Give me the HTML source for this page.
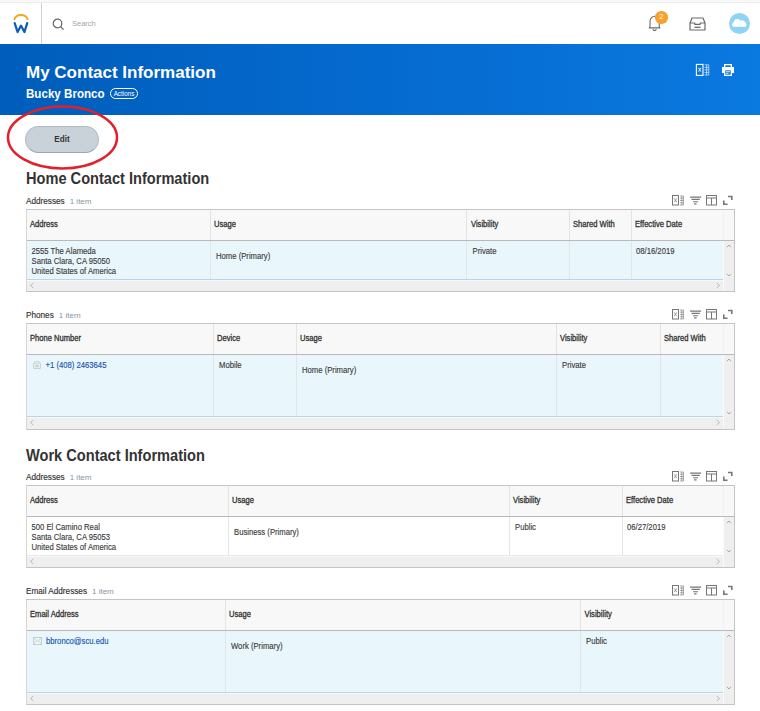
<!DOCTYPE html>
<html><head><meta charset="utf-8">
<style>
*{margin:0;padding:0;box-sizing:border-box}
html,body{width:760px;height:711px;overflow:hidden;background:#fff;font-family:"Liberation Sans",sans-serif;color:#333}
.abs{position:absolute}
#top{position:absolute;left:0;top:0;width:760px;height:44px;background:#fff;border-top:2px solid #f8f8f8;box-shadow:inset 0 1px 0 #ededed}
#sep{position:absolute;left:41px;top:3px;width:1px;height:41px;background:#cdd5dc}
#hdr{position:absolute;left:0;top:44px;width:760px;height:71px;background:linear-gradient(90deg,#005dbb 0%,#056acf 50%,#0a79e0 100%)}
.t{position:absolute;white-space:nowrap;line-height:1}
.h1{font-weight:bold;font-size:17px;color:#fff}
.sec{font-weight:bold;font-size:14.6px;color:#333;transform:scaleY(1.1);transform-origin:0 0}
.lbl{font-size:8.2px;color:#333;-webkit-text-stroke:0.15px #333}
.lbl span{color:#8795a3;margin-left:5px;font-size:8px;-webkit-text-stroke:0}
.tbl{position:absolute;left:26px;width:709px;border:1px solid #c9c9c9;background:#fafafa}
.th{position:absolute;top:0;left:0;right:0;background:#f8f8f8;border-bottom:2px solid #c4c4c4}
.row{position:absolute;left:0;background:#e8f5fb;border-bottom:1px solid #9fcbe6}
.row.w{background:#fff;border-bottom:1px solid #e0e0e0}
.hs{position:absolute;left:0;background:#efefef}
.vs{position:absolute;right:0;width:11px;background:#efefef}
.col{position:absolute;width:1px;background:#e2e2e2}
.hd{position:absolute;font-weight:normal;font-size:7.6px;-webkit-text-stroke:0.28px #333;color:#333;white-space:nowrap;line-height:1;transform:scaleY(1.1);transform-origin:0 0}
.cd{position:absolute;font-size:7.7px;color:#3a3a3a;-webkit-text-stroke-width:0.12px;white-space:nowrap;line-height:9px;transform:scaleY(1.1);transform-origin:0 0}
.lnk{color:#1753b0}
</style></head><body>

<div id="top"></div>
<div id="sep"></div>
<!-- logo -->
<svg class="abs" style="left:12px;top:13px" width="18" height="21" viewBox="0 0 18 21">
  <path d="M2.2 7 A7 6.5 0 0 1 15.8 7" fill="none" stroke="#f5a623" stroke-width="2"/>
  <path d="M2.7 10.1 L5.6 19.1 L9 12.6 L12.4 19.1 L15.2 10.1" fill="none" stroke="#0b5fb8" stroke-width="2.2" stroke-linejoin="round" stroke-linecap="round"/>
</svg>
<!-- search -->
<svg class="abs" style="left:52px;top:17.8px" width="13" height="13" viewBox="0 0 13 13">
  <circle cx="5.5" cy="5.5" r="4.3" fill="none" stroke="#666" stroke-width="1.2"/>
  <path d="M8.6 8.6 L11.6 11.6" stroke="#666" stroke-width="1.3"/>
</svg>
<div class="t" style="left:72px;top:20px;font-size:7.5px;color:#a6a6a6">Search</div>
<!-- bell -->
<svg class="abs" style="left:647px;top:14px" width="16" height="18" viewBox="0 0 16 18">
  <path d="M3 12.5 L3 7.5 A4.6 5.2 0 0 1 12.2 7.5 L12.2 12.5 L12.9 13.9 L2.3 13.9 Z" fill="none" stroke="#6b6b6b" stroke-width="1.1" stroke-linejoin="round"/>
  <path d="M6 15 A1.6 1.6 0 0 0 9.2 15" fill="none" stroke="#6b6b6b" stroke-width="1.1"/>
</svg>
<div class="abs" style="left:655px;top:11px;width:12.5px;height:12.5px;border-radius:50%;background:#f7a12c;color:#fff;font-size:7.5px;text-align:center;line-height:12.5px">2</div>
<!-- inbox -->
<svg class="abs" style="left:688.5px;top:16.5px" width="17" height="14" viewBox="0 0 17 14">
  <path d="M1 13 L1 6 L3 1 L14 1 L16 6 L16 13 Z M1 6 L5.8 6 L5.8 7.3 L11.2 7.3 L11.2 6 L16 6" fill="none" stroke="#6b6b6b" stroke-width="1.2" stroke-linejoin="round"/>
  <path d="M5.5 10.3 L11.5 10.3" stroke="#6b6b6b" stroke-width="1.3"/>
</svg>
<!-- avatar -->
<div class="abs" style="left:729px;top:13px;width:21px;height:21px;border-radius:50%;background:#8fd3f5"></div>
<svg class="abs" style="left:732px;top:17px" width="15" height="11" viewBox="0 0 15 11">
  <g fill="#fff"><rect x="0.3" y="6.6" width="14" height="3.1" rx="1.3"/><circle cx="5.3" cy="5.4" r="3.5"/><circle cx="10" cy="6.2" r="2.9"/><circle cx="2.6" cy="7.3" r="2.3"/><circle cx="12" cy="7.4" r="2.3"/></g>
</svg>

<div id="hdr"></div>
<div class="t h1" style="left:26px;top:64px">My Contact Information</div>
<div class="t" style="left:26px;top:86.5px;font-size:11.6px;font-weight:bold;color:#fff;transform:scaleY(1.1);transform-origin:0 0">Bucky Bronco</div>
<div class="abs" style="left:110px;top:88px;width:28px;height:11px;border:1px solid #fff;border-radius:6px;color:#fff;font-size:6.3px;text-align:center;line-height:9.6px">Actions</div>
<!-- excel icon header -->
<svg class="abs" style="left:695px;top:63px" width="15" height="14" viewBox="0 0 15 14">
  <rect x="1.4" y="1.4" width="6.6" height="11" fill="none" stroke="#fff" stroke-width="1.1"/>
  <path d="M3.5 4.8 L5.9 8.6 M5.9 4.8 L3.5 8.6" stroke="#fff" stroke-width="0.9"/>
  <path d="M9.5 1.8 L13.8 1.8 L13.8 12 L9.5 12 M9.5 4.4 L13.8 4.4 M9.5 6.9 L13.8 6.9 M9.5 9.4 L13.8 9.4 M11.6 1.8 L11.6 12" fill="none" stroke="#fff" stroke-width="0.6"/>
</svg>
<svg class="abs" style="left:721px;top:63px" width="14" height="14" viewBox="0 0 14 14">
  <path d="M3 1 L11 1 L11 4 L13 4 L13 10 L11 10 L11 13 L3 13 L3 10 L1 10 L1 4 L3 4 Z" fill="#fff"/>
  <rect x="4.3" y="7.3" width="5.4" height="4.4" fill="#0977dd"/>
  <path d="M5 8.7 L9 8.7 M5 10.3 L7.5 10.3" stroke="#fff" stroke-width="0.8"/>
  <rect x="4.3" y="2.3" width="5.4" height="1.7" fill="#0977dd"/>
</svg>

<!-- Edit button -->
<div class="abs" style="left:25px;top:126px;width:74px;height:27px;border-radius:14px;background:#cad2d9;border:1px solid #b3bbc2;border-bottom-color:#9ea7af"></div>
<div class="t" style="left:54.3px;top:135px;font-size:8.1px;font-weight:bold;color:#333;transform:scaleY(1.12);transform-origin:0 0">Edit</div>
<svg class="abs" style="left:0;top:100px" width="130" height="75" viewBox="0 0 130 75">
  <ellipse cx="62.5" cy="37.5" rx="54.5" ry="30.9" fill="none" stroke="#e2202b" stroke-width="2.5"/>
</svg>

<div class="t sec" style="left:26px;top:171px">Home Contact Information</div>
<div class="t sec" style="left:26px;top:448px">Work Contact Information</div>


<div class="t lbl" style="left:26px;top:198px">Addresses<span>1 item</span></div>
<svg class="abs" style="left:671px;top:195px" width="64" height="11" viewBox="0 0 64 11">
<g fill="none" stroke="#777" stroke-width="1">
<rect x="1.5" y="0.5" width="6" height="9.5"/>
<path d="M3.2 3.3 L5.8 7.2 M5.8 3.3 L3.2 7.2" stroke-width="0.7"/>
<path d="M9 1 L12.5 1 L12.5 10 L9 10 M9 3.2 L12.5 3.2 M9 5.5 L12.5 5.5 M9 7.8 L12.5 7.8 M10.8 1 L10.8 10" stroke-width="0.6"/>
<path d="M19.1 2.1 L30.1 2.1 M20.5 4.4 L28.8 4.4 M22.1 6.7 L27.1 6.7 M23.1 8.9 L25.6 8.9" stroke-width="1.1"/>
<rect x="35.5" y="0.5" width="10" height="9.5"/>
<path d="M35.5 3 L45.5 3 M40.5 3 L40.5 10"/>
<path d="M52.8 5.6 L52.8 9.2 L56.6 9.2 M57 1.5 L60.8 1.5 L60.8 5" stroke-width="1.6"/>
</g></svg>
<div class="abs" style="left:26px;top:209px;width:709px;height:83px;border:1px solid #c4c4c4;border-left-color:#d6d6d6;background:#fff"></div>
<div class="abs" style="left:27px;top:210px;width:707px;height:30px;background:#f8f8f8"></div>
<div class="abs" style="left:27px;top:240px;width:707px;height:1px;background:#b9b9b9"></div>
<div class="abs" style="left:27px;top:241px;width:696px;height:38px;background:#e9f6fc"></div>
<div class="abs" style="left:27px;top:279px;width:696px;height:1px;background:#b3d6ea"></div>
<div class="abs" style="left:27px;top:280px;width:696px;height:1px;background:#fbf8f8"></div>
<div class="abs" style="left:27px;top:281px;width:696px;height:10px;background:#efefef"></div>
<svg class="abs" style="left:29px;top:281.5px" width="6" height="7" viewBox="0 0 6 7"><path d="M4.3 1 L1.5 3.5 L4.3 6" fill="none" stroke="#b0b0b0" stroke-width="0.9"/></svg>
<svg class="abs" style="left:715px;top:281.5px" width="6" height="7" viewBox="0 0 6 7"><path d="M1.7 1 L4.5 3.5 L1.7 6" fill="none" stroke="#b0b0b0" stroke-width="0.9"/></svg>
<div class="abs" style="left:723px;top:241px;width:11px;height:50px;background:#efefef;border-left:1px solid #fafafa"></div>
<div class="abs" style="left:723px;top:210px;width:1px;height:30px;background:#f1f1f1"></div>
<svg class="abs" style="left:726px;top:244.2px" width="6" height="4" viewBox="0 0 6 4"><path d="M0.9 3.2 L3 1 L5.1 3.2" fill="none" stroke="#a9a9a9" stroke-width="1"/></svg>
<svg class="abs" style="left:726px;top:272.5px" width="6" height="4" viewBox="0 0 6 4"><path d="M0.9 0.8 L3 3 L5.1 0.8" fill="none" stroke="#a9a9a9" stroke-width="1"/></svg>
<div class="abs" style="left:210px;top:210px;width:1px;height:30px;background:#e3e3e3"></div>
<div class="abs" style="left:210px;top:241px;width:1px;height:38px;background:#e1e6e8"></div>
<div class="abs" style="left:466px;top:210px;width:1px;height:30px;background:#e3e3e3"></div>
<div class="abs" style="left:466px;top:241px;width:1px;height:38px;background:#e1e6e8"></div>
<div class="abs" style="left:569px;top:210px;width:1px;height:30px;background:#e3e3e3"></div>
<div class="abs" style="left:569px;top:241px;width:1px;height:38px;background:#e1e6e8"></div>
<div class="abs" style="left:631px;top:210px;width:1px;height:30px;background:#e3e3e3"></div>
<div class="abs" style="left:631px;top:241px;width:1px;height:38px;background:#e1e6e8"></div>
<div class="hd" style="left:30px;top:220px">Address</div>
<div class="hd" style="left:214px;top:220px">Usage</div>
<div class="hd" style="left:471px;top:220px">Visibility</div>
<div class="hd" style="left:573px;top:220px">Shared With</div>
<div class="hd" style="left:635px;top:220px">Effective Date</div>
<div class="cd" style="left:31.5px;top:246px">2555 The Alameda<br>Santa Clara, CA 95050<br>United States of America</div>
<div class="cd" style="left:216px;top:251px">Home (Primary)</div>
<div class="cd" style="left:472.5px;top:246px">Private</div>
<div class="cd" style="left:636px;top:246px">08/16/2019</div>
<div class="t lbl" style="left:26px;top:312px">Phones<span>1 item</span></div>
<svg class="abs" style="left:671px;top:309px" width="64" height="11" viewBox="0 0 64 11">
<g fill="none" stroke="#777" stroke-width="1">
<rect x="1.5" y="0.5" width="6" height="9.5"/>
<path d="M3.2 3.3 L5.8 7.2 M5.8 3.3 L3.2 7.2" stroke-width="0.7"/>
<path d="M9 1 L12.5 1 L12.5 10 L9 10 M9 3.2 L12.5 3.2 M9 5.5 L12.5 5.5 M9 7.8 L12.5 7.8 M10.8 1 L10.8 10" stroke-width="0.6"/>
<path d="M19.1 2.1 L30.1 2.1 M20.5 4.4 L28.8 4.4 M22.1 6.7 L27.1 6.7 M23.1 8.9 L25.6 8.9" stroke-width="1.1"/>
<rect x="35.5" y="0.5" width="10" height="9.5"/>
<path d="M35.5 3 L45.5 3 M40.5 3 L40.5 10"/>
<path d="M52.8 5.6 L52.8 9.2 L56.6 9.2 M57 1.5 L60.8 1.5 L60.8 5" stroke-width="1.6"/>
</g></svg>
<div class="abs" style="left:26px;top:323px;width:709px;height:107px;border:1px solid #c4c4c4;border-left-color:#d6d6d6;background:#fff"></div>
<div class="abs" style="left:27px;top:324px;width:707px;height:30px;background:#f8f8f8"></div>
<div class="abs" style="left:27px;top:354px;width:707px;height:1px;background:#b9b9b9"></div>
<div class="abs" style="left:27px;top:355px;width:696px;height:61px;background:#e9f6fc"></div>
<div class="abs" style="left:27px;top:416px;width:696px;height:1px;background:#b3d6ea"></div>
<div class="abs" style="left:27px;top:417px;width:696px;height:1px;background:#fbf8f8"></div>
<div class="abs" style="left:27px;top:418px;width:696px;height:11px;background:#efefef"></div>
<svg class="abs" style="left:29px;top:419.0px" width="6" height="7" viewBox="0 0 6 7"><path d="M4.3 1 L1.5 3.5 L4.3 6" fill="none" stroke="#b0b0b0" stroke-width="0.9"/></svg>
<svg class="abs" style="left:715px;top:419.0px" width="6" height="7" viewBox="0 0 6 7"><path d="M1.7 1 L4.5 3.5 L1.7 6" fill="none" stroke="#b0b0b0" stroke-width="0.9"/></svg>
<div class="abs" style="left:723px;top:355px;width:11px;height:74px;background:#efefef;border-left:1px solid #fafafa"></div>
<div class="abs" style="left:723px;top:324px;width:1px;height:30px;background:#f1f1f1"></div>
<svg class="abs" style="left:726px;top:358.2px" width="6" height="4" viewBox="0 0 6 4"><path d="M0.9 3.2 L3 1 L5.1 3.2" fill="none" stroke="#a9a9a9" stroke-width="1"/></svg>
<svg class="abs" style="left:726px;top:410.5px" width="6" height="4" viewBox="0 0 6 4"><path d="M0.9 0.8 L3 3 L5.1 0.8" fill="none" stroke="#a9a9a9" stroke-width="1"/></svg>
<div class="abs" style="left:213px;top:324px;width:1px;height:30px;background:#e3e3e3"></div>
<div class="abs" style="left:213px;top:355px;width:1px;height:61px;background:#e1e6e8"></div>
<div class="abs" style="left:296px;top:324px;width:1px;height:30px;background:#e3e3e3"></div>
<div class="abs" style="left:296px;top:355px;width:1px;height:61px;background:#e1e6e8"></div>
<div class="abs" style="left:556px;top:324px;width:1px;height:30px;background:#e3e3e3"></div>
<div class="abs" style="left:556px;top:355px;width:1px;height:61px;background:#e1e6e8"></div>
<div class="abs" style="left:660px;top:324px;width:1px;height:30px;background:#e3e3e3"></div>
<div class="abs" style="left:660px;top:355px;width:1px;height:61px;background:#e1e6e8"></div>
<div class="hd" style="left:30px;top:334px">Phone Number</div>
<div class="hd" style="left:217px;top:334px">Device</div>
<div class="hd" style="left:300px;top:334px">Usage</div>
<div class="hd" style="left:560px;top:334px">Visibility</div>
<div class="hd" style="left:664px;top:334px">Shared With</div>
<div class="cd" style="left:45.5px;top:360px"><span class="lnk">+1 (408) 2463645</span></div>
<svg class="abs" style="left:33px;top:361px" width="8" height="8" viewBox="0 0 8 8"><path d="M0.6 3 Q0.6 0.6 4 0.6 Q7.4 0.6 7.4 3 L7.4 7.4 L0.6 7.4 Z" fill="none" stroke="#c9cdd0" stroke-width="1"/><path d="M2.2 5.8 L3 4 L5 4 L5.8 5.8 Z M1 2.6 L7 2.6" fill="#c9cdd0" stroke="#c9cdd0" stroke-width="0.6"/></svg>
<div class="cd" style="left:219px;top:360px">Mobile</div>
<div class="cd" style="left:302px;top:365px">Home (Primary)</div>
<div class="cd" style="left:562px;top:360px">Private</div>
<div class="t lbl" style="left:26px;top:474px">Addresses<span>1 item</span></div>
<svg class="abs" style="left:671px;top:471px" width="64" height="11" viewBox="0 0 64 11">
<g fill="none" stroke="#777" stroke-width="1">
<rect x="1.5" y="0.5" width="6" height="9.5"/>
<path d="M3.2 3.3 L5.8 7.2 M5.8 3.3 L3.2 7.2" stroke-width="0.7"/>
<path d="M9 1 L12.5 1 L12.5 10 L9 10 M9 3.2 L12.5 3.2 M9 5.5 L12.5 5.5 M9 7.8 L12.5 7.8 M10.8 1 L10.8 10" stroke-width="0.6"/>
<path d="M19.1 2.1 L30.1 2.1 M20.5 4.4 L28.8 4.4 M22.1 6.7 L27.1 6.7 M23.1 8.9 L25.6 8.9" stroke-width="1.1"/>
<rect x="35.5" y="0.5" width="10" height="9.5"/>
<path d="M35.5 3 L45.5 3 M40.5 3 L40.5 10"/>
<path d="M52.8 5.6 L52.8 9.2 L56.6 9.2 M57 1.5 L60.8 1.5 L60.8 5" stroke-width="1.6"/>
</g></svg>
<div class="abs" style="left:26px;top:485px;width:709px;height:83px;border:1px solid #c4c4c4;border-left-color:#d6d6d6;background:#fff"></div>
<div class="abs" style="left:27px;top:486px;width:707px;height:30px;background:#f8f8f8"></div>
<div class="abs" style="left:27px;top:516px;width:707px;height:1px;background:#b9b9b9"></div>
<div class="abs" style="left:27px;top:517px;width:696px;height:38px;background:#fff"></div>
<div class="abs" style="left:27px;top:555px;width:696px;height:1px;background:#e8e8e8"></div>
<div class="abs" style="left:27px;top:556px;width:696px;height:1px;background:#fbf8f8"></div>
<div class="abs" style="left:27px;top:557px;width:696px;height:10px;background:#efefef"></div>
<svg class="abs" style="left:29px;top:557.5px" width="6" height="7" viewBox="0 0 6 7"><path d="M4.3 1 L1.5 3.5 L4.3 6" fill="none" stroke="#b0b0b0" stroke-width="0.9"/></svg>
<svg class="abs" style="left:715px;top:557.5px" width="6" height="7" viewBox="0 0 6 7"><path d="M1.7 1 L4.5 3.5 L1.7 6" fill="none" stroke="#b0b0b0" stroke-width="0.9"/></svg>
<div class="abs" style="left:723px;top:517px;width:11px;height:50px;background:#efefef;border-left:1px solid #fafafa"></div>
<div class="abs" style="left:723px;top:486px;width:1px;height:30px;background:#f1f1f1"></div>
<svg class="abs" style="left:726px;top:520.2px" width="6" height="4" viewBox="0 0 6 4"><path d="M0.9 3.2 L3 1 L5.1 3.2" fill="none" stroke="#a9a9a9" stroke-width="1"/></svg>
<svg class="abs" style="left:726px;top:548.5px" width="6" height="4" viewBox="0 0 6 4"><path d="M0.9 0.8 L3 3 L5.1 0.8" fill="none" stroke="#a9a9a9" stroke-width="1"/></svg>
<div class="abs" style="left:228px;top:486px;width:1px;height:30px;background:#e3e3e3"></div>
<div class="abs" style="left:228px;top:517px;width:1px;height:38px;background:#e1e6e8"></div>
<div class="abs" style="left:509px;top:486px;width:1px;height:30px;background:#e3e3e3"></div>
<div class="abs" style="left:509px;top:517px;width:1px;height:38px;background:#e1e6e8"></div>
<div class="abs" style="left:622px;top:486px;width:1px;height:30px;background:#e3e3e3"></div>
<div class="abs" style="left:622px;top:517px;width:1px;height:38px;background:#e1e6e8"></div>
<div class="hd" style="left:30px;top:496px">Address</div>
<div class="hd" style="left:232px;top:496px">Usage</div>
<div class="hd" style="left:513px;top:496px">Visibility</div>
<div class="hd" style="left:626px;top:496px">Effective Date</div>
<div class="cd" style="left:31.5px;top:522px">500 El Camino Real<br>Santa Clara, CA 95053<br>United States of America</div>
<div class="cd" style="left:234px;top:527px">Business (Primary)</div>
<div class="cd" style="left:515px;top:522px">Public</div>
<div class="cd" style="left:627px;top:522px">06/27/2019</div>
<div class="t lbl" style="left:26px;top:587.5px">Email Addresses<span>1 item</span></div>
<svg class="abs" style="left:671px;top:585px" width="64" height="11" viewBox="0 0 64 11">
<g fill="none" stroke="#777" stroke-width="1">
<rect x="1.5" y="0.5" width="6" height="9.5"/>
<path d="M3.2 3.3 L5.8 7.2 M5.8 3.3 L3.2 7.2" stroke-width="0.7"/>
<path d="M9 1 L12.5 1 L12.5 10 L9 10 M9 3.2 L12.5 3.2 M9 5.5 L12.5 5.5 M9 7.8 L12.5 7.8 M10.8 1 L10.8 10" stroke-width="0.6"/>
<path d="M19.1 2.1 L30.1 2.1 M20.5 4.4 L28.8 4.4 M22.1 6.7 L27.1 6.7 M23.1 8.9 L25.6 8.9" stroke-width="1.1"/>
<rect x="35.5" y="0.5" width="10" height="9.5"/>
<path d="M35.5 3 L45.5 3 M40.5 3 L40.5 10"/>
<path d="M52.8 5.6 L52.8 9.2 L56.6 9.2 M57 1.5 L60.8 1.5 L60.8 5" stroke-width="1.6"/>
</g></svg>
<div class="abs" style="left:26px;top:599px;width:709px;height:106px;border:1px solid #c4c4c4;border-left-color:#d6d6d6;background:#fff"></div>
<div class="abs" style="left:27px;top:600px;width:707px;height:30px;background:#f8f8f8"></div>
<div class="abs" style="left:27px;top:630px;width:707px;height:1px;background:#b9b9b9"></div>
<div class="abs" style="left:27px;top:631px;width:696px;height:61px;background:#e9f6fc"></div>
<div class="abs" style="left:27px;top:692px;width:696px;height:1px;background:#b3d6ea"></div>
<div class="abs" style="left:27px;top:693px;width:696px;height:1px;background:#fbf8f8"></div>
<div class="abs" style="left:27px;top:694px;width:696px;height:10px;background:#efefef"></div>
<svg class="abs" style="left:29px;top:694.5px" width="6" height="7" viewBox="0 0 6 7"><path d="M4.3 1 L1.5 3.5 L4.3 6" fill="none" stroke="#b0b0b0" stroke-width="0.9"/></svg>
<svg class="abs" style="left:715px;top:694.5px" width="6" height="7" viewBox="0 0 6 7"><path d="M1.7 1 L4.5 3.5 L1.7 6" fill="none" stroke="#b0b0b0" stroke-width="0.9"/></svg>
<div class="abs" style="left:723px;top:631px;width:11px;height:73px;background:#efefef;border-left:1px solid #fafafa"></div>
<div class="abs" style="left:723px;top:600px;width:1px;height:30px;background:#f1f1f1"></div>
<svg class="abs" style="left:726px;top:634.2px" width="6" height="4" viewBox="0 0 6 4"><path d="M0.9 3.2 L3 1 L5.1 3.2" fill="none" stroke="#a9a9a9" stroke-width="1"/></svg>
<svg class="abs" style="left:726px;top:685.5px" width="6" height="4" viewBox="0 0 6 4"><path d="M0.9 0.8 L3 3 L5.1 0.8" fill="none" stroke="#a9a9a9" stroke-width="1"/></svg>
<div class="abs" style="left:225px;top:600px;width:1px;height:30px;background:#e3e3e3"></div>
<div class="abs" style="left:225px;top:631px;width:1px;height:61px;background:#e1e6e8"></div>
<div class="abs" style="left:580px;top:600px;width:1px;height:30px;background:#e3e3e3"></div>
<div class="abs" style="left:580px;top:631px;width:1px;height:61px;background:#e1e6e8"></div>
<div class="hd" style="left:30px;top:610px">Email Address</div>
<div class="hd" style="left:229px;top:610px">Usage</div>
<div class="hd" style="left:584.5px;top:610px">Visibility</div>
<div class="cd" style="left:46px;top:636px"><span class="lnk">bbronco@scu.edu</span></div>
<svg class="abs" style="left:33px;top:637px" width="9" height="8" viewBox="0 0 9 8"><rect x="0.5" y="0.5" width="8" height="7" fill="none" stroke="#c9cdd0" stroke-width="1"/><path d="M0.8 1 L4.5 4.5 L8.2 1 M0.8 7 L3.3 3.6 M8.2 7 L5.7 3.6" fill="none" stroke="#c9cdd0" stroke-width="0.8"/></svg>
<div class="cd" style="left:231px;top:641px">Work (Primary)</div>
<div class="cd" style="left:586px;top:636px">Public</div>
</body></html>
